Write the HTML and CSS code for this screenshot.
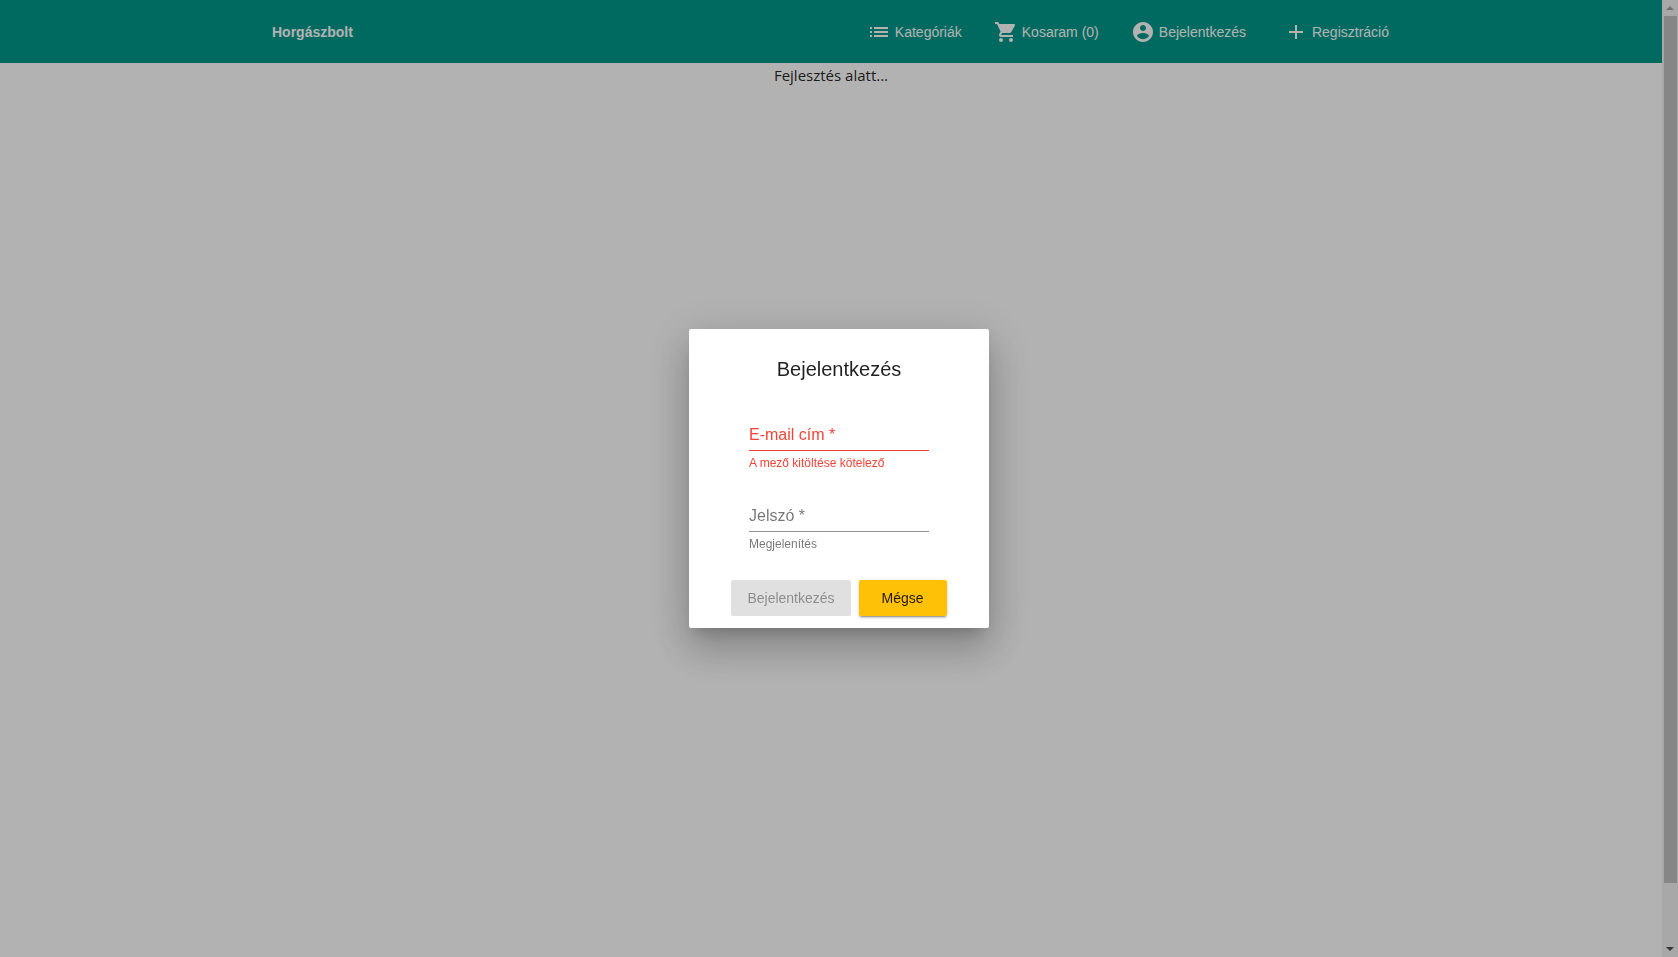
FILE: index.html
```html
<!DOCTYPE html>
<html lang="hu">
<head>
<meta charset="utf-8">
<title>Horgászbolt</title>
<link rel="stylesheet" href="styles.css">
</head>
<body>
<div class="page">
  <div class="content">
    <header class="navbar">
      <div class="navbar-inner">
        <a class="brand" href="#">Horgászbolt</a>
        <nav class="links">
          <a class="link" href="#"><svg class="icon" viewBox="0 0 24 24"><path d="M3 13h2v-2H3v2zm0 4h2v-2H3v2zm0-8h2V7H3v2zm4 4h14v-2H7v2zm0 4h14v-2H7v2zM7 7v2h14V7H7z"/></svg>Kategóriák</a>
          <a class="link" href="#"><svg class="icon" viewBox="0 0 24 24"><path d="M7 18c-1.1 0-1.99.9-1.99 2S5.9 22 7 22s2-.9 2-2-.9-2-2-2zM1 2v2h2l3.6 7.59-1.35 2.45c-.16.28-.25.61-.25.96 0 1.1.9 2 2 2h12v-2H7.42c-.14 0-.25-.11-.25-.25l.03-.12.9-1.63h7.45c.75 0 1.41-.41 1.75-1.03l3.58-6.49c.08-.14.12-.31.12-.48 0-.55-.45-1-1-1H5.21l-.94-2H1zm16 16c-1.1 0-1.99.9-1.99 2s.89 2 1.99 2 2-.9 2-2-.9-2-2-2z"/></svg>Kosaram (0)</a>
          <a class="link" href="#"><svg class="icon" viewBox="0 0 24 24"><path d="M12 2C6.48 2 2 6.48 2 12s4.48 10 10 10 10-4.48 10-10S17.52 2 12 2zm0 3c1.66 0 3 1.34 3 3s-1.34 3-3 3-3-1.34-3-3 1.34-3 3-3zm0 14.2c-2.5 0-4.71-1.28-6-3.22.03-1.99 4-3.08 6-3.08 1.99 0 5.97 1.09 6 3.08-1.29 1.94-3.5 3.22-6 3.22z"/></svg>Bejelentkezés</a>
          <a class="link link-register" href="#"><svg class="icon" viewBox="0 0 24 24"><path d="M19 13h-6v6h-2v-6H5v-2h6V5h2v6h6v2z"/></svg>Regisztráció</a>
        </nav>
      </div>
    </header>
    <main class="notice">Fejlesztés alatt...</main>
  </div>
  <div class="scrollbar" aria-hidden="true">
    <svg class="arrow arrow-up" viewBox="0 0 16 16"><path d="M4 10h8L8 6z"/></svg>
    <div class="track"><div class="thumb"></div></div>
    <svg class="arrow arrow-down" viewBox="0 0 16 16"><path d="M4 6h8l-4 4z"/></svg>
  </div>
</div>
<div class="backdrop">
  <form class="dialog" role="dialog" aria-labelledby="dialog-title">
    <h1 class="title" id="dialog-title">Bejelentkezés</h1>
    <div class="fields">
      <div class="field field-invalid">
        <div class="control">
          <input class="input" id="email" type="email" aria-describedby="email-error" aria-invalid="true">
          <label class="label" for="email">E-mail cím *</label>
        </div>
        <div class="hint" id="email-error">A mező kitöltése kötelező</div>
      </div>
      <div class="field">
        <div class="control">
          <input class="input" id="password" type="password">
          <label class="label" for="password">Jelszó *</label>
        </div>
        <a class="hint" href="#">Megjelenítés</a>
      </div>
    </div>
    <div class="actions">
      <button class="button" type="submit" disabled>Bejelentkezés</button>
      <button class="button button-accent" type="button">Mégse</button>
    </div>
  </form>
</div>
</body>
</html>
```
FILE: styles.css
```css
* {
  box-sizing: border-box;
}

body {
  margin: 0;
  font-family: "Liberation Sans", Arial, sans-serif;
  color: rgba(0, 0, 0, 0.87);
}

a {
  color: inherit;
  text-decoration: none;
}

.page {
  display: flex;
  height: 100vh;
  background: #fff;
}

.content {
  flex: 1;
}

.navbar {
  padding: 0 273px 0 272px;
  background: #00998b;
  color: #fff;
  font-size: 14px;
}

.navbar-inner,
.links,
.link {
  display: flex;
  align-items: center;
}

.navbar-inner {
  justify-content: space-between;
  height: 63px;
}

.brand {
  font-weight: bold;
}

.links {
  gap: 32px;
}

.link {
  gap: 4px;
  white-space: nowrap;
}

.link-register {
  margin-left: 6px;
}

.icon {
  width: 24px;
  height: 24px;
  fill: currentColor;
}

.notice {
  font-family: "Open Sans", "Noto Sans", sans-serif;
  font-size: 15px;
  line-height: 24px;
  text-align: center;
}

.scrollbar {
  display: flex;
  flex-direction: column;
  width: 16px;
  background: #f1f1f1;
}

.track {
  flex: 1;
  padding: 0 1px 0 2px;
}

.thumb {
  height: 93.7%;
  background: #c1c1c1;
}

.arrow {
  width: 16px;
  height: 16px;
}

.arrow-up {
  fill: #a3a3a3;
}

.arrow-down {
  fill: #505050;
}

.backdrop {
  position: fixed;
  inset: 0;
  display: flex;
  align-items: center;
  justify-content: center;
  background: rgba(0, 0, 0, 0.3);
}

.dialog {
  width: 300px;
  padding: 24px 24px 12px;
  border-radius: 2px;
  background: #fff;
  box-shadow: 0 11px 15px -7px rgba(0, 0, 0, 0.2),
    0 24px 38px 3px rgba(0, 0, 0, 0.14),
    0 9px 46px 8px rgba(0, 0, 0, 0.12);
}

.title {
  margin: 0 0 36px;
  font-size: 20px;
  font-weight: normal;
  line-height: 32px;
  text-align: center;
}

.fields {
  display: flex;
  flex-direction: column;
  gap: 31px;
  width: 180px;
  margin: 0 auto 28px;
}

.field {
  color: rgba(0, 0, 0, 0.54);
}

.control {
  position: relative;
  margin-bottom: 4px;
  border-bottom: 1px solid rgba(0, 0, 0, 0.42);
}

.field-invalid {
  color: #f44336;
}

.field-invalid .control {
  border-color: #f44336;
}

.input {
  display: block;
  width: 100%;
  height: 29px;
  padding: 0;
  border: 0;
  outline: 0;
  background: transparent;
  font: inherit;
}

.label {
  position: absolute;
  top: 4px;
  left: 0;
  font-size: 16px;
  line-height: 20px;
}

.hint {
  display: block;
  font-size: 12px;
  line-height: 16px;
}

.actions {
  display: flex;
  justify-content: center;
  gap: 8px;
}

.button {
  min-width: 88px;
  height: 36px;
  padding: 0 16px;
  border: 0;
  border-radius: 2px;
  background: #e0e0e0;
  color: rgba(0, 0, 0, 0.38);
  font-family: inherit;
  font-size: 14px;
}

.button-accent {
  background: #ffc107;
  color: rgba(0, 0, 0, 0.87);
  box-shadow: 0 3px 1px -2px rgba(0, 0, 0, 0.2),
    0 2px 2px 0 rgba(0, 0, 0, 0.14),
    0 1px 5px 0 rgba(0, 0, 0, 0.12);
}
```
